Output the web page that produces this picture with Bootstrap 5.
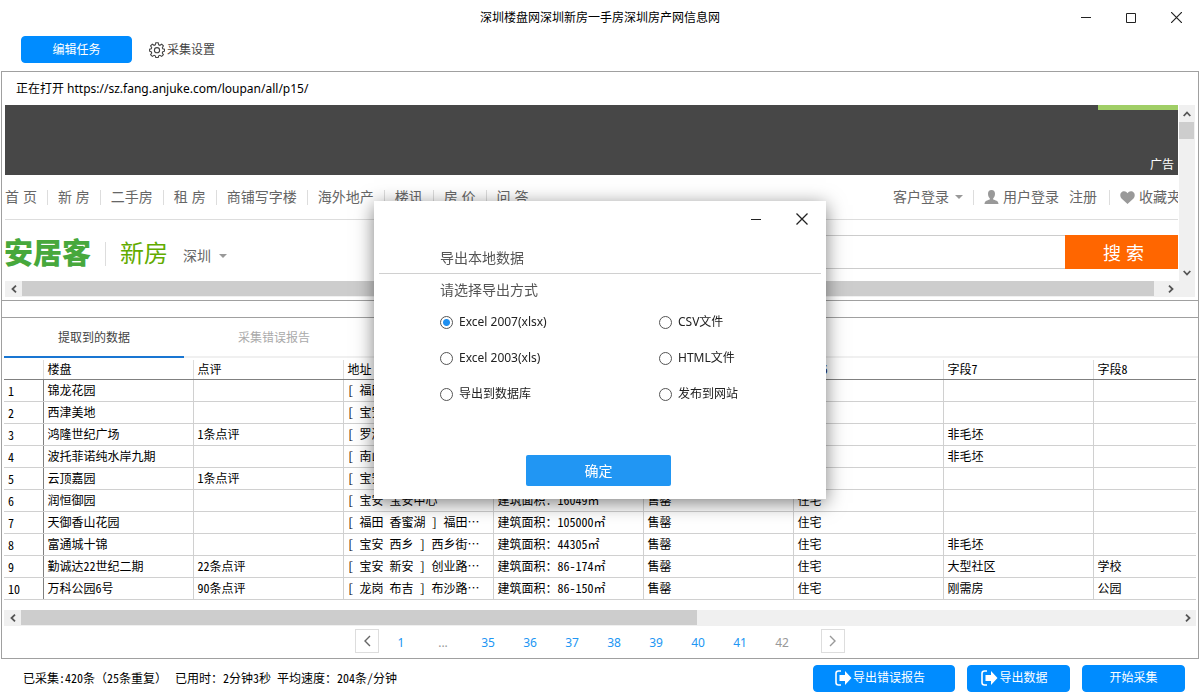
<!DOCTYPE html>
<html lang="zh-CN">
<head>
<meta charset="utf-8">
<meta name="viewport" content="width=device-width, initial-scale=1">
<title>深圳楼盘网深圳新房一手房深圳房产网信息网</title>
<link href="https://cdn.jsdelivr.net/npm/bootstrap@5.3.0/dist/css/bootstrap.min.css" rel="stylesheet">
<style>
  body { font: 12px/20px "Noto Sans", "Noto Sans CJK SC", sans-serif; color: #000; min-height: 100vh; background: #fff; }
  svg { display: block; flex: none; }
  a { text-decoration: none; }
  .half { font-family: "Noto Sans CJK SC", sans-serif; font-feature-settings: "hwid"; }
  .full { font-feature-settings: normal; }
  .ctl { border: 0; background: none; padding: 0; display: flex; align-items: center; justify-content: center; color: #222; }

  .titlebar { height: 36px; }
  .titlebar h1 { font-size: 12px; line-height: 20px; }
  .winctl { gap: 35px; right: 18px; top: 12px; }
  .tools { height: 35px; padding-left: 21px; }
  .act { --bs-btn-bg: #008cff; --bs-btn-border-color: #008cff; --bs-btn-color: #fff; --bs-btn-hover-bg: #007be0; --bs-btn-hover-color: #fff;
         --bs-btn-font-size: 12px; --bs-btn-line-height: 20px; --bs-btn-border-radius: 4px; --bs-btn-padding-y: 0; --bs-btn-padding-x: 0;
         height: 27px; display: inline-flex; align-items: center; justify-content: center; }
  .act-edit { width: 111px; }
  .act-report { width: 142px; }
  .act-data, .act-start { width: 103px; }
  .act-report, .act-data { padding-right: 8px; gap: 1px; }
  .tools .ctl { color: #444; margin-left: 17px; height: 27px; gap: 2px; }

  .frame { border: 1px solid #a0a0a0; margin: 0 1px; }
  .addr { height: 33px; padding-left: 14px; line-height: 33px; }
  .view { margin: 0 3px 3px; }
  .ad { height: 70px; background: #474747; color: #fff; }
  .ad i { width: 80px; height: 5px; background: #a0ce66; }
  .ad span { padding: 0 4px; }
  .site { font-family: "Liberation Sans", "Noto Sans CJK SC", sans-serif; font-size: 14px; line-height: 20px; color: #666; }
  .site a { color: #666; white-space: nowrap; }
  .menu { height: 45px; border-bottom: 1px solid #ddd; }
  .menu .entry { padding: 0 10px; border-left: 1px solid #ddd; line-height: 15px; }
  .menu .entry:first-child { border: 0; padding-left: 0; }
  .menu .signup { padding-right: 12px; }
  .menu .cut { width: 39px; overflow: hidden; }
  .caret { border: 4px solid transparent; border-top-color: #999; border-bottom: 0; }
  .brandrow { height: 61px; }
  .brandset { padding-top: 18px; }
  .brandrow .brand { font-size: 29px; line-height: 32px; font-weight: 900; color: #47a83c; width: 86px; margin-left: -1px; }
  .brandrow .sub { font-size: 24px; line-height: 24px; color: #62ab00; border-left: 1px solid #ddd; padding-left: 14px; margin: 0 15px; }
  .find { margin: 15px 0 12px; }
  .find input { width: 400px; height: 34px; border: 1px solid #ccc; border-right: 0; border-radius: 0; }
  .find button { width: 113px; height: 34px; background: #f60; color: #fff; font-size: 18px; border: 0; padding: 4px 0 0 4px; }

  .bar { background: #f0f0f0; height: 16px; }
  .bar .thumb { background: #cdcdcd; height: 15px; }
  .bar .ctl { width: 17px; height: 16px; color: #555; }
  .vbar { width: 16px; background: #f0f0f0; margin-left: 1px; }
  .vbar .ctl { width: 16px; height: 17px; color: #555; }
  .vbar .thumb { height: 17px; width: 15px; background: #cdcdcd; }
  .band { height: 18px; border: 1px solid #a0a0a0; border-width: 1px 0; }

  .filetabs { height: 40px; border-bottom: 2px solid #f0f0f0; margin-left: 2px; }
  .filetabs button { width: 180px; border: 0; background: none; color: #aaa; height: 40px; border-bottom: 2px solid transparent; padding: 2px 0 0; }
  .filetabs .active { color: #444; border-bottom-color: #1976d2; }
  .gridwrap { margin: 2px 2px 0; }
  .grid { table-layout: fixed; width: 100%; line-height: 19px; }
  .grid th, .grid td { padding: 0 4px; height: 22px; font-weight: 400; vertical-align: top; white-space: nowrap; overflow: hidden; border: 0 solid #d0d0d0; border-width: 0 1px 1px 0; }
  .grid thead th { height: 19px; line-height: 18px; border-color: #808080; border-right-color: #ddd; }
  .grid tbody th { border-right-color: #808080; padding-top: 1px; }
  .grid tr > :last-child { border-right: 0; }
  .grid col { width: 150px; }
  .grid .c0 { width: 39px; }
  .grid .cz { width: auto; }
  .lower { margin: 10px 2px 0; }
  .pager { height: 32px; padding-top: 3px; }
  .pager .box { width: 24px; height: 24px; border: 1px solid #ddd; color: #666; }
  .pager .num { width: 42px; text-align: center; color: #2196f3; line-height: 28px; }
  .pager .off { color: #999; }
  .pager .gap-mark { margin-right: 3px; }
  .pager .box:first-child { margin-right: 1px; }
  .pager .box:last-child { margin-left: 18px; }
  .foot { padding: 6px 15px 8px 23px; }
  .footbtns { gap: 12px; }

  .veil { pointer-events: none; z-index: 10; }
  .dlg { pointer-events: auto; width: 452px; background: #fff; box-shadow: 0 4px 18px rgba(0,0,0,.5); padding: 11px 5px 13px; color: #222; }
  .dlg .tops { gap: 34px; padding-right: 13px; height: 14px; }
  .dlg h2 { font-size: 14px; line-height: 20px; color: #555; margin: 22px 0 0; padding: 0 61px 5px; border-bottom: 1px solid #d0d0d0; }
  .dlg fieldset { padding: 0 61px; }
  .dlg legend { font-size: 14px; line-height: 20px; color: #555; margin: 0 0 12px; padding-top: 6px; float: none; }
  .opts { display: grid; grid-template-columns: 219px 1fr; row-gap: 16px; margin-bottom: 51px; }
  .opts .form-check { min-height: 0; padding: 0; margin: 0; display: flex; align-items: center; gap: 6px; }
  .opts input.form-check-input { float: none; margin: 0; width: 13px; height: 13px; border: 1px solid #555; background: #fff; box-shadow: none; }
  .opts input.form-check-input:checked { background: radial-gradient(circle, #1e8ff0 0 3px, #fff 4px); }
  .okbtn { width: 145px; height: 31px; background: #2196f3; color: #fff; border: 0; border-radius: 2px; font-size: 14px; margin-right: 3px; }
</style>
</head>
<body class="d-flex flex-column">

<header>
  <div class="titlebar position-relative d-flex justify-content-center align-items-center">
    <h1 class="m-0 fw-normal">深圳楼盘网深圳新房一手房深圳房产网信息网</h1>
    <div class="winctl position-absolute d-flex">
      <button class="ctl" aria-label="最小化"><svg width="10" height="11"><path d="M0 5.5h10" stroke="currentColor"/></svg></button>
      <button class="ctl" aria-label="最大化"><svg width="10" height="10"><path d="M.5.5h9v9h-9z" fill="none" stroke="currentColor"/></svg></button>
      <button class="ctl" aria-label="关闭"><svg width="11" height="11"><path d="M0 0l11 11M11 0L0 11" stroke="currentColor" stroke-width="1.2"/></svg></button>
    </div>
  </div>
  <div class="tools d-flex align-items-start">
    <button class="btn act act-edit">编辑任务</button>
    <button class="ctl"><svg width="16" height="16" viewBox="0 0 16 16" fill="none" stroke="#444" stroke-width="1.1"><path d="M6.8.8h2.4l.5 2 1.2.5 1.8-1.1 1.7 1.7-1.1 1.8.5 1.2 1.7.4v1.9l-1.7.6-.5 1.2 1.1 1.7-1.7 1.7-1.8-1.1-1.2.5-.5 1.7H6.8l-.5-1.7-1.2-.5-1.8 1.1-1.7-1.7 1.1-1.7-.5-1.2L.6 9.200V7.300l1.600-.4.5-1.200-1.100-1.800 1.700-1.700 1.800 1.100 1.200-.5z"/><circle cx="8" cy="8.200" r="2.600"/></svg>采集设置</button>
  </div>
</header>

<main class="frame">
  <div class="addr">正在打开 https://sz.fang.anjuke.com/loupan/all/p15/</div>
  <section class="view">
    <div class="d-flex">
      <div class="flex-grow-1 overflow-hidden">
        <div class="ad d-flex flex-column justify-content-between align-items-end"><i></i><span>广告</span></div>
        <div class="site">
          <nav class="menu d-flex align-items-center">
            <a class="entry" href="#">首 页</a><a class="entry" href="#">新 房</a><a class="entry" href="#">二手房</a><a class="entry" href="#">租 房</a><a class="entry" href="#">商铺写字楼</a><a class="entry" href="#">海外地产</a><a class="entry" href="#">楼讯</a><a class="entry" href="#">房 价</a><a class="entry" href="#">问 答</a>
            <div class="ms-auto d-flex">
              <a class="entry d-flex align-items-center" style="gap:6px" href="#">客户登录 <span class="caret"></span></a>
              <a class="entry d-flex align-items-center gap-1 pe-0" href="#"><svg width="15" height="14" viewBox="0 0 15 14"><path fill="#999" d="M7.500 0C9.800 0 11 1.600 11 3.800c0 2-.8 3.600-1.800 4.500v1.200c2 .7 5.300 1.300 5.300 4.500H.5c0-3.200 3.300-3.800 5.300-4.500V8.300C4.800 7.400 4 5.800 4 3.800 4 1.600 5.200 0 7.500 0z"/></svg>用户登录</a>
              <a class="entry border-0 signup" href="#">注册</a>
              <a class="entry d-flex align-items-center gap-1 pe-0" href="#"><svg width="15" height="13" viewBox="0 0 15 13"><path fill="#999" d="M7.500 13L1.500 7.500C-.5 5.400 0 1.800 2.500.6 4.500-.3 6.500.6 7.500 2.300 8.500.6 10.500-.3 12.500.6 15 1.800 15.500 5.400 13.500 7.500z"/></svg><span class="cut">收藏夹</span></a>
            </div>
          </nav>
          <div class="brandrow d-flex align-items-start">
            <div class="brandset d-flex align-items-center">
              <a class="brand" href="#">安居客</a><a class="sub" href="#">新房</a>
              <a class="d-flex align-items-center gap-2 pt-1" href="#">深圳 <span class="caret"></span></a>
            </div>
            <form class="find d-flex ms-auto">
              <input class="form-control" type="search" aria-label="搜索"><button type="button">搜 索</button>
            </form>
          </div>
        </div>
      </div>
      <div class="vbar d-flex flex-column">
        <button class="ctl" aria-label="向上"><svg width="8" height="6"><path d="M.7 5L4 1.500 7.300 5" fill="none" stroke="currentColor" stroke-width="1.800"/></svg></button>
        <div class="thumb"></div>
        <button class="ctl mt-auto" aria-label="向下"><svg width="8" height="6"><path d="M.7 1L4 4.500 7.300 1" fill="none" stroke="currentColor" stroke-width="1.800"/></svg></button>
      </div>
    </div>
    <div class="bar d-flex pe-3">
      <button class="ctl" aria-label="向左"><svg width="6" height="8"><path d="M5 .7L1.500 4 5 7.300" fill="none" stroke="currentColor" stroke-width="1.800"/></svg></button>
      <div class="thumb flex-grow-1 me-2"></div>
      <button class="ctl" aria-label="向右"><svg width="6" height="8"><path d="M1 .7L4.500 4 1 7.300" fill="none" stroke="currentColor" stroke-width="1.800"/></svg></button>
    </div>
  </section>
  <div class="band"></div>

  <div class="filetabs d-flex" role="tablist">
    <button class="active" role="tab" aria-selected="true">提取到的数据</button><button role="tab" aria-selected="false">采集错误报告</button>
  </div>
  <div class="gridwrap overflow-hidden half">
    <table class="grid">
      <colgroup><col class="c0"><col><col><col><col><col><col><col><col class="cz"></colgroup>
      <thead><tr><th></th><th>楼盘</th><th>点评</th><th>地址</th><th></th><th></th><th>字段6</th><th>字段7</th><th>字段8</th></tr></thead>
      <tbody>
        <tr><th>1</th><td>锦龙花园</td><td></td><td>[ 福田</td><td></td><td></td><td></td><td></td><td></td></tr>
        <tr><th>2</th><td>西津美地</td><td></td><td>[ 宝安</td><td></td><td></td><td></td><td></td><td></td></tr>
        <tr><th>3</th><td>鸿隆世纪广场</td><td>1条点评</td><td>[ 罗湖</td><td></td><td></td><td></td><td>非毛坯</td><td></td></tr>
        <tr><th>4</th><td>波托菲诺纯水岸九期</td><td></td><td>[ 南山</td><td></td><td></td><td></td><td>非毛坯</td><td></td></tr>
        <tr><th>5</th><td>云顶嘉园</td><td>1条点评</td><td>[ 宝安</td><td></td><td></td><td></td><td></td><td></td></tr>
        <tr><th>6</th><td>润恒御园</td><td></td><td>[ 宝安 宝安中心</td><td>建筑面积：16049㎡</td><td>售罄</td><td>住宅</td><td></td><td></td></tr>
        <tr><th>7</th><td>天御香山花园</td><td></td><td>[ 福田 香蜜湖 ] 福田…</td><td>建筑面积：105000㎡</td><td>售罄</td><td>住宅</td><td></td><td></td></tr>
        <tr><th>8</th><td>富通城十锦</td><td></td><td>[ 宝安 西乡 ] 西乡街…</td><td>建筑面积：44305㎡</td><td>售罄</td><td>住宅</td><td>非毛坯</td><td></td></tr>
        <tr><th>9</th><td>勤诚达22世纪二期</td><td>22条点评</td><td>[ 宝安 新安 ] 创业路…</td><td>建筑面积：86-174㎡</td><td>售罄</td><td>住宅</td><td>大型社区</td><td>学校</td></tr>
        <tr><th>10</th><td>万科公园6号</td><td>90条点评</td><td>[ 龙岗 布吉 ] 布沙路…</td><td>建筑面积：86-150㎡</td><td>售罄</td><td>住宅</td><td>刚需房</td><td>公园</td></tr>
      </tbody>
    </table>
  </div>
  <div class="lower bar d-flex">
    <button class="ctl" aria-label="向左"><svg width="6" height="8"><path d="M5 .7L1.500 4 5 7.300" fill="none" stroke="currentColor" stroke-width="1.800"/></svg></button>
    <div class="flex-grow-1"><div class="thumb" style="width:58.4%"></div></div>
    <button class="ctl" aria-label="向右"><svg width="6" height="8"><path d="M1 .7L4.500 4 1 7.300" fill="none" stroke="currentColor" stroke-width="1.800"/></svg></button>
  </div>
  <nav class="pager d-flex justify-content-center" aria-label="分页">
    <button class="ctl box" aria-label="上一页"><svg width="8" height="12"><path d="M7 1L2 6l5 5" fill="none" stroke="currentColor" stroke-width="1.400"/></svg></button>
    <a class="num" href="#">1</a><span class="num off gap-mark">...</span><a class="num" href="#">35</a><a class="num" href="#">36</a><a class="num" href="#">37</a><a class="num" href="#">38</a><a class="num" href="#">39</a><a class="num" href="#">40</a><a class="num" href="#">41</a><span class="num off">42</span>
    <button class="ctl box" aria-label="下一页"><svg width="8" height="12"><path d="M1 1l5 5-5 5" fill="none" stroke="#999" stroke-width="1.400"/></svg></button>
  </nav>
</main>

<footer class="foot d-flex align-items-center">
  <div class="half d-flex gap-2"><span>已采集:420条<span class="full">（</span>25条重复<span class="full">）</span></span><span>已用时：2分钟3秒 平均速度：204条/分钟</span></div>
  <div class="footbtns ms-auto d-flex">
    <button class="btn act act-report"><svg width="17" height="16" viewBox="0 0 17 16"><path d="M6 1H3.500Q1 1 1 3.500v9Q1 15 3.500 15H6" fill="none" stroke="#fff" stroke-width="1.600"/><path d="M4.500 5H10V1l6.500 7-6.500 7v-4H4.500z" fill="#fff"/></svg>导出错误报告</button>
    <button class="btn act act-data"><svg width="17" height="16" viewBox="0 0 17 16"><path d="M6 1H3.500Q1 1 1 3.500v9Q1 15 3.500 15H6" fill="none" stroke="#fff" stroke-width="1.600"/><path d="M4.500 5H10V1l6.500 7-6.500 7v-4H4.500z" fill="#fff"/></svg>导出数据</button>
    <button class="btn act act-start">开始采集</button>
  </div>
</footer>

<div class="veil position-fixed top-0 start-0 w-100 h-100 d-flex align-items-center justify-content-center">
  <div class="dlg" role="dialog" aria-labelledby="dlgTitle">
    <div class="tops d-flex justify-content-end align-items-center">
      <button class="ctl" aria-label="最小化"><svg width="11" height="11"><path d="M0 5.500h10" stroke="#222"/></svg></button>
      <button class="ctl" aria-label="关闭"><svg width="12" height="12"><path d="M.5.500l11 11M11.500.500l-11 11" stroke="#222" stroke-width="1.300"/></svg></button>
    </div>
    <h2 class="fw-normal" id="dlgTitle">导出本地数据</h2>
    <fieldset>
      <legend>请选择导出方式</legend>
      <div class="opts">
        <div class="form-check"><input class="form-check-input" type="radio" name="fmt" id="f1" checked><label for="f1">Excel 2007(xlsx)</label></div>
        <div class="form-check"><input class="form-check-input" type="radio" name="fmt" id="f2"><label for="f2">CSV文件</label></div>
        <div class="form-check"><input class="form-check-input" type="radio" name="fmt" id="f3"><label for="f3">Excel 2003(xls)</label></div>
        <div class="form-check"><input class="form-check-input" type="radio" name="fmt" id="f4"><label for="f4">HTML文件</label></div>
        <div class="form-check"><input class="form-check-input" type="radio" name="fmt" id="f5"><label for="f5">导出到数据库</label></div>
        <div class="form-check"><input class="form-check-input" type="radio" name="fmt" id="f6"><label for="f6">发布到网站</label></div>
      </div>
    </fieldset>
    <div class="text-center"><button class="okbtn">确定</button></div>
  </div>
</div>

<script src="https://cdn.jsdelivr.net/npm/bootstrap@5.3.0/dist/js/bootstrap.bundle.min.js"></script>
</body>
</html>
